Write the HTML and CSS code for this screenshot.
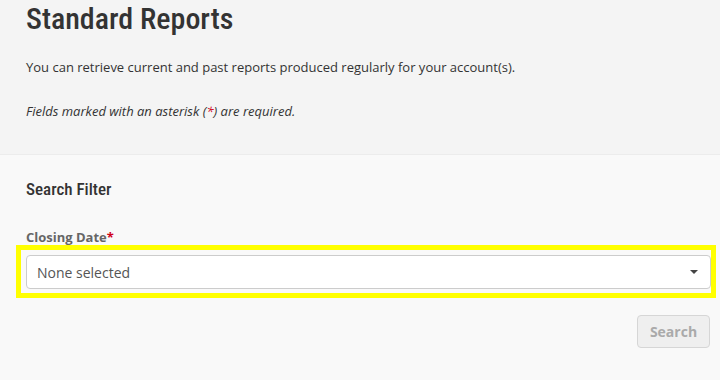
FILE: index.html
```html
<!DOCTYPE html>
<html>
<head>
<meta charset="utf-8">
<link rel="stylesheet" href="styles.css">
</head>
<body>
<header class="intro">
  <h1 class="title">Standard Reports</h1>
  <p class="lead">You can retrieve current and past reports produced regularly for your account(s).</p>
  <p class="note">Fields marked with an asterisk (<span class="req">*</span>) are required.</p>
</header>
<main class="filter">
  <h2 class="filter-title">Search Filter</h2>
  <label class="field-label">Closing Date<span class="req">*</span></label>
  <div class="highlight">
    <div class="select">
      <span class="select-text">None selected</span>
      <span class="caret"></span>
    </div>
  </div>
  <div class="actions">
    <button class="btn" disabled>Search</button>
  </div>
</main>
</body>
</html>
```
FILE: styles.css
```css
html, body {
  margin: 0;
  padding: 0;
  background: #f9f9f9;
}
body {
  font-family: "Open Sans", "Liberation Sans", sans-serif;
  color: #333;
  width: 720px;
  height: 380px;
  overflow: hidden;
}
.intro {
  background: #f4f4f4;
  border-bottom: 1px solid #ececec;
  padding: 0 26px;
  height: 155px;
  box-sizing: border-box;
}
.title {
  margin: 0;
  padding-top: 1px;
  font-family: "Roboto Condensed", Roboto, sans-serif;
  font-weight: 500;
  font-size: 30px;
  line-height: 36px;
  color: #333;
}
.lead {
  margin: 21px 0 0;
  font-size: 13px;
  line-height: 18px;
}
.note {
  margin: 26px 0 0;
  font-size: 13px;
  line-height: 18px;
  font-style: italic;
}
.req {
  color: #d0021b;
}
.filter {
  padding: 0 10px 0 26px;
}
.filter-title {
  margin: 0;
  padding-top: 24px;
  font-family: "Roboto Condensed", Roboto, sans-serif;
  font-weight: 500;
  font-size: 17px;
  line-height: 20px;
  color: #333;
}
.field-label {
  display: block;
  margin-top: 29px;
  font-size: 13px;
  font-weight: 700;
  line-height: 18px;
  color: #666;
}
.highlight {
  margin-left: -10px;
  margin-right: -6px;
  margin-top: -1px;
  border: 5px solid #ffff00;
  padding: 5px 0 4px 5px;
}
.select {
  display: flex;
  align-items: center;
  justify-content: space-between;
  height: 34px;
  box-sizing: border-box;
  background: #fff;
  border: 1px solid #ccc;
  border-radius: 4px;
  padding: 0 12px 0 10px;
}
.select-text {
  font-size: 14px;
  color: #555;
}
.caret {
  width: 0;
  height: 0;
  border-left: 4px solid transparent;
  border-right: 4px solid transparent;
  border-top: 4px solid #444;
}
.actions {
  display: flex;
  justify-content: flex-end;
  margin-top: 17px;
}
.btn {
  font-family: "Open Sans", "Liberation Sans", sans-serif;
  font-size: 14px;
  font-weight: 700;
  color: #aaa;
  background: #efefef;
  border: 1px solid #d6d6d6;
  border-radius: 4px;
  width: 73px;
  height: 33px;
  padding: 0;
}
```
